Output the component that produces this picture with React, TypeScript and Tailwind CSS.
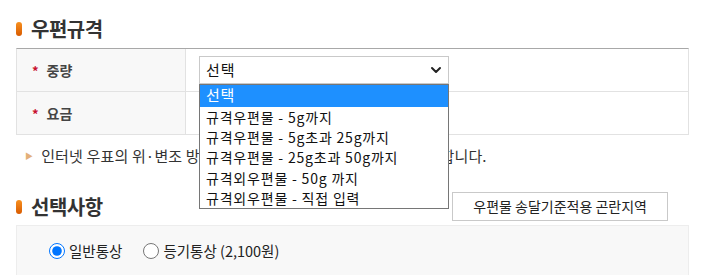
import { ChevronDown } from 'lucide-react'

const font = { fontFamily: '"Noto Sans CJK KR", "Noto Sans", sans-serif' }

const options = [
  '선택',
  '규격우편물 - 5g까지',
  '규격우편물 - 5g초과 25g까지',
  '규격우편물 - 25g초과 50g까지',
  '규격외우편물 - 50g 까지',
  '규격외우편물 - 직접 입력',
]

function Bullet() {
  return <span className="inline-block w-[6px] h-[14px] rounded-full bg-gradient-to-b from-[#f7901e] to-[#d85a00]" />
}

function Heading({ text }: { text: string }) {
  return (
    <h2 className="flex items-center gap-[9px] text-[20px] font-bold text-[#333] tracking-[-0.5px]">
      <Bullet />
      {text}
    </h2>
  )
}

function Row({ label, children }: { label: string; children?: React.ReactNode }) {
  return (
    <div className="flex h-[43px] border-b border-[#e2e2e2]">
      <div className="w-[169px] shrink-0 flex items-center gap-[8px] pl-[15px] bg-[#f8f8f8] border-r border-[#e2e2e2]">
        <span className="text-[#c8102e] text-[13px] font-bold leading-none">*</span>
        <span className="text-[14px] font-bold text-[#444]">{label}</span>
      </div>
      <div className="flex-1 flex items-center pl-[13px]">{children}</div>
    </div>
  )
}

export default function App() {
  return (
    <div className="w-[710px] h-[275px] overflow-hidden bg-white pl-4 pt-[15px]" style={font}>
      <div className="w-[673px]">
        <div className="h-[28px] flex items-center">
          <Heading text="우편규격" />
        </div>

        <div className="mt-[5px] border-t border-[#a8a8a8] border-x border-x-[#e2e2e2]">
          <Row label="중량">
            <div className="relative">
              <div className="w-[250px] h-[28px] border border-[#c9c9c9] bg-white flex items-center justify-between pl-[6px] pr-[4px] text-[15px] text-[#111]">
                <span className="tracking-[1px]">선택</span>
                <ChevronDown size={16} strokeWidth={3} className="text-[#222]" />
              </div>
              <ul className="absolute left-0 top-[28px] z-10 w-[250px] bg-white border border-[#767676] text-[14px] text-[#111] leading-[20.5px] tracking-[0.8px]">
                {options.map((o, i) => (
                  <li
                    key={o}
                    className={i === 0 ? 'pl-[6px] bg-[#1e90ff] text-white text-[15px] h-[21.5px]' : 'pl-[6px] h-[20.4px]'}
                  >
                    {o}
                  </li>
                ))}
              </ul>
            </div>
          </Row>
          <Row label="요금" />
        </div>

        <p className="mt-[11px] flex items-center gap-[8px] pl-[9px] text-[15px] text-[#333] leading-[20px] tracking-[0.15px]">
          <span className="text-[#e3b07a] text-[8px]">▶</span>
          인터넷 우표의 위·변조 방지를 위해 바코드가 함께 인쇄되어야만 합니다.
        </p>

        <div className="mt-[26px] h-[29px] flex items-center justify-between pr-[21px]">
          <Heading text="선택사항" />
          <button className="h-[29px] px-[20px] border border-[#c9c9c9] bg-white text-[14px] text-[#222]">
            우편물 송달기준적용 곤란지역
          </button>
        </div>

        <div className="mt-[4px] h-[60px] bg-[#f8f8f8] border border-[#ededed] flex items-start pt-[14px] pl-[32px] gap-[21px] text-[14.5px] text-[#222]">
          <label className="flex items-center gap-[4px]">
            <input type="radio" name="kind" defaultChecked className="w-[16px] h-[16px] m-0" />
            일반통상
          </label>
          <label className="flex items-center gap-[4px]">
            <input type="radio" name="kind" className="w-[16px] h-[16px] m-0" />
            등기통상 (2,100원)
          </label>
        </div>
      </div>
    </div>
  )
}
